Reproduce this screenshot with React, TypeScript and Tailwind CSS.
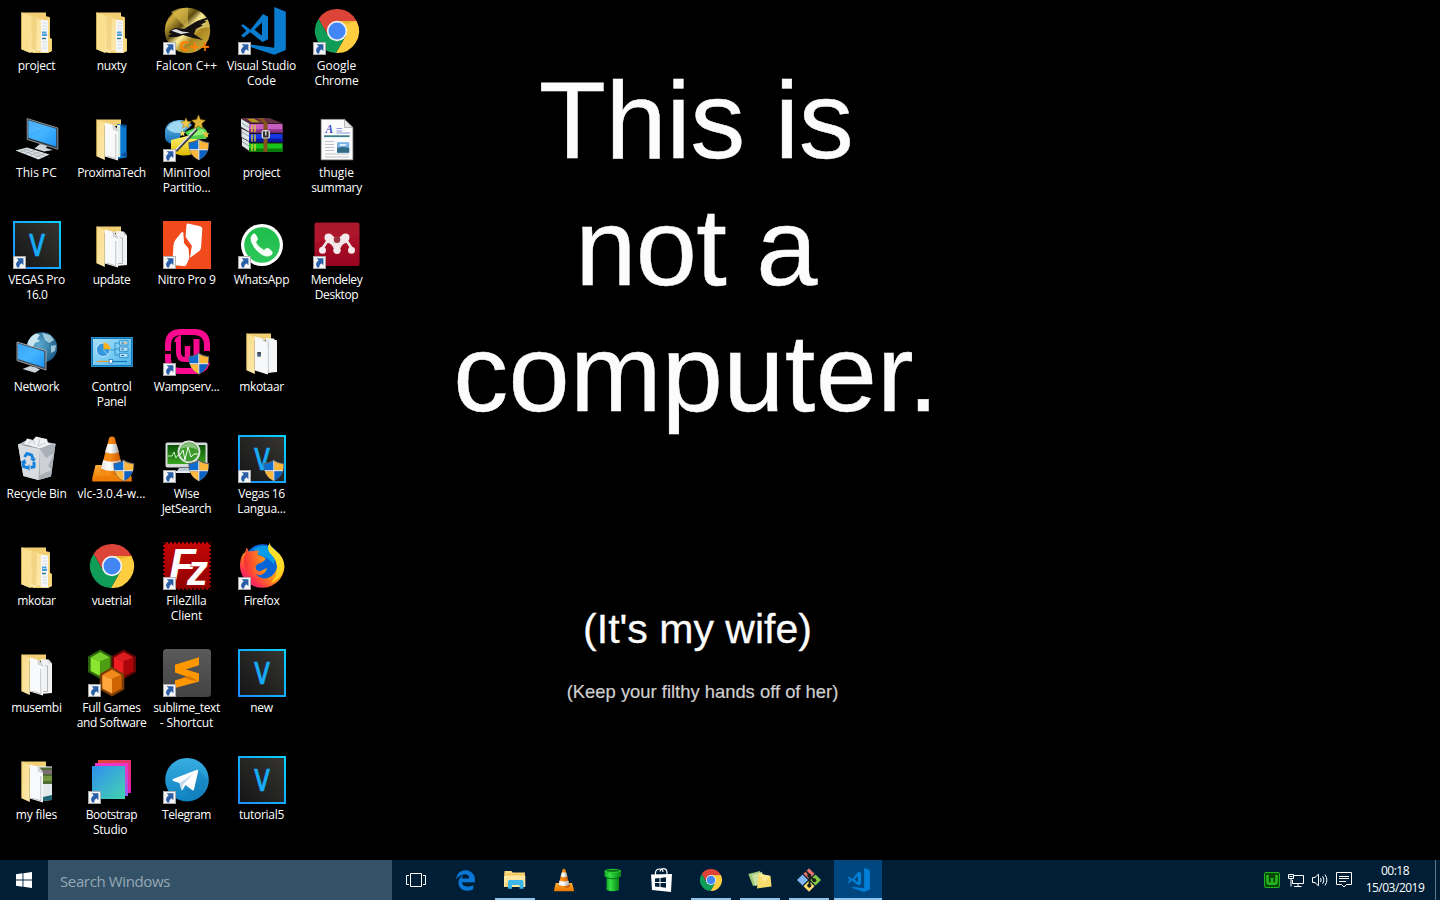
import { useLayoutEffect, useRef, useState, type ReactNode } from "react";
import { FaEdgeLegacy } from "react-icons/fa";

/** A single line of text whose letter spacing is adjusted to a given width. */
function FitLine({ text, width }: { text: string; width: number }) {
  const ref = useRef<HTMLSpanElement>(null);
  const [spacing, setSpacing] = useState(0);
  useLayoutEffect(() => {
    if (ref.current) {
      const natural = ref.current.getBoundingClientRect().width - spacing * text.length;
      setSpacing((width + 1 - natural) / text.length);
    }
  }, [text, width]);
  return (
    <span ref={ref} className="block w-max whitespace-pre" style={{ letterSpacing: `${spacing}px` }}>
      {text}
    </span>
  );
}

function SharedGradients() {
  return (
    <svg width="0" height="0" className="absolute">
      <defs>
        <linearGradient id="flap" x1="0" y1="0" x2="1" y2="1">
          <stop offset="0" stopColor="#f9dc87" />
          <stop offset="1" stopColor="#fde9ae" />
        </linearGradient>
        <linearGradient id="screen" x1="0" y1="0" x2="1" y2="1">
          <stop offset="0" stopColor="#3aa5f5" />
          <stop offset="0.5" stopColor="#45b4ff" />
          <stop offset="1" stopColor="#1c95f7" />
        </linearGradient>
        <linearGradient id="vbg" x1="0" y1="1" x2="1" y2="0">
          <stop offset="0" stopColor="#151515" />
          <stop offset="1" stopColor="#353432" />
        </linearGradient>
        <linearGradient id="vedge" x1="0" y1="1" x2="1" y2="0">
          <stop offset="0" stopColor="#1e8cff" />
          <stop offset="1" stopColor="#08d0fb" />
        </linearGradient>
        <linearGradient id="gold" x1="0" y1="0" x2="1" y2="1">
          <stop offset="0" stopColor="#6b5510" />
          <stop offset="0.2" stopColor="#c9a93a" />
          <stop offset="0.38" stopColor="#5d4b10" />
          <stop offset="0.5" stopColor="#fff09a" />
          <stop offset="0.65" stopColor="#a88620" />
          <stop offset="1" stopColor="#dcbc48" />
        </linearGradient>
        <linearGradient id="fox" x1="0.9" y1="0" x2="0.1" y2="0.9">
          <stop offset="0" stopColor="#fff44f" />
          <stop offset="0.35" stopColor="#ffc61e" />
          <stop offset="0.6" stopColor="#ff8a16" />
          <stop offset="0.82" stopColor="#ff3647" />
          <stop offset="1" stopColor="#e31587" />
        </linearGradient>
        <linearGradient id="foxhead" x1="0" y1="0" x2="1" y2="0">
          <stop offset="0" stopColor="#f5203f" />
          <stop offset="1" stopColor="#ff9416" />
        </linearGradient>
        <radialGradient id="globe" cx="0.4" cy="0.4" r="0.7">
          <stop offset="0" stopColor="#5caad0" />
          <stop offset="1" stopColor="#17567f" />
        </radialGradient>
        <linearGradient id="bs" x1="0" y1="0" x2="1" y2="1">
          <stop offset="0" stopColor="#2f8cf0" />
          <stop offset="1" stopColor="#45d6b0" />
        </linearGradient>
        <linearGradient id="bs2" x1="0" y1="0" x2="0" y2="1">
          <stop offset="0" stopColor="#f531c0" />
          <stop offset="1" stopColor="#8965f5" />
        </linearGradient>
        <linearGradient id="bs3" x1="0" y1="0" x2="1" y2="1">
          <stop offset="0" stopColor="#df4b27" />
          <stop offset="1" stopColor="#e41dbb" />
        </linearGradient>
        <linearGradient id="tg" x1="0" y1="0" x2="0" y2="1">
          <stop offset="0" stopColor="#37aee2" />
          <stop offset="1" stopColor="#1081c0" />
        </linearGradient>
        <linearGradient id="wa" x1="0" y1="0" x2="0" y2="1">
          <stop offset="0" stopColor="#1fbd4b" />
          <stop offset="1" stopColor="#2cc85a" />
        </linearGradient>
        <linearGradient id="cone" x1="0" y1="0" x2="1" y2="0">
          <stop offset="0" stopColor="#f08a1c" />
          <stop offset="0.4" stopColor="#f98b12" />
          <stop offset="1" stopColor="#bd4c02" />
        </linearGradient>
        <linearGradient id="coneWhite" x1="0" y1="0" x2="1" y2="0">
          <stop offset="0" stopColor="#e4e4e4" />
          <stop offset="0.4" stopColor="#ffffff" />
          <stop offset="1" stopColor="#a6a6a6" />
        </linearGradient>
        <linearGradient id="coneBase" x1="0" y1="0" x2="0" y2="1">
          <stop offset="0" stopColor="#fbb13b" />
          <stop offset="1" stopColor="#f08208" />
        </linearGradient>
        <linearGradient id="mend" x1="0" y1="0" x2="0" y2="1">
          <stop offset="0" stopColor="#a8182b" />
          <stop offset="0.45" stopColor="#b3152c" />
          <stop offset="1" stopColor="#9a0520" />
        </linearGradient>
        <linearGradient id="fz" x1="0" y1="0" x2="0" y2="1">
          <stop offset="0" stopColor="#c40606" />
          <stop offset="1" stopColor="#900000" />
        </linearGradient>
        <linearGradient id="st" x1="0" y1="0" x2="0" y2="1">
          <stop offset="0" stopColor="#5a5a5a" />
          <stop offset="1" stopColor="#434343" />
        </linearGradient>
        <linearGradient id="cp" x1="0" y1="0" x2="1" y2="1">
          <stop offset="0" stopColor="#a6def8" />
          <stop offset="0.5" stopColor="#7bcdf5" />
          <stop offset="1" stopColor="#4fb4ec" />
        </linearGradient>
        <linearGradient id="disk" x1="0" y1="0" x2="0" y2="1">
          <stop offset="0" stopColor="#6fc0ec" />
          <stop offset="1" stopColor="#0a67b0" />
        </linearGradient>
        <linearGradient id="pie" x1="0" y1="0" x2="0" y2="1">
          <stop offset="0" stopColor="#fff36a" />
          <stop offset="1" stopColor="#dfb800" />
        </linearGradient>
        <linearGradient id="pipe" x1="0" y1="0" x2="1" y2="0">
          <stop offset="0" stopColor="#0da522" />
          <stop offset="0.3" stopColor="#35e043" />
          <stop offset="1" stopColor="#078615" />
        </linearGradient>
        <linearGradient id="greenScreen" x1="0" y1="0" x2="0" y2="1">
          <stop offset="0" stopColor="#0a5207" />
          <stop offset="1" stopColor="#39a51e" />
        </linearGradient>
      </defs>
    </svg>
  );
}

function ShortcutArrow() {
  return (
    <g>
      <rect x="0.4" y="35.4" width="12.2" height="12.2" fill="#f4f4f4" stroke="#a9a9a9" strokeWidth="0.8" />
      <path d="M3.6 37.2H10.4V44.2L8.5 42.3Q6 43.6 6.2 46.4H4.3Q1.2 42.6 5.7 39.3Z" fill="#2a5ea6" />
    </g>
  );
}

function Shield() {
  return (
    <g>
      <path d="M35.8 24.6Q40 28 46.3 28.2Q46.8 41 35.8 46.6Q25 41 25.3 28.2Q31.6 28 35.8 24.6Z" fill="#5c5f66" />
      <path d="M35.3 26.2Q31.3 29 26.3 29.2Q26.2 32.4 26.8 35.2H35.3Z" fill="#0f6dd0" />
      <path d="M36.3 26.2Q40.3 29 45.3 29.2Q45.4 32.4 44.8 35.2H36.3Z" fill="#fbb73a" />
      <path d="M35.3 36.2H27Q29 42.4 35.3 45.6Z" fill="#fcb93d" />
      <path d="M36.3 36.2H44.6Q42.6 42.4 36.3 45.6Z" fill="#0a62c4" />
      <path d="M35.8 26V45.8M26.7 35.7H45" stroke="#fff" strokeWidth="0.9" />
    </g>
  );
}

function FullFolder() {
  return (
    <g>
      <path d="M8.5 5.5H33V9.3L36.8 10V31L38.8 32V44L35 46H20Z" fill="#f2cf73" />
      <path d="M27.5 12.5L35 13.5V45.5L27.5 45Z" fill="#f5f6f7" />
      <path d="M29.5 16H34M29.5 19H34M29.5 22H34M29.5 35H34M29.5 38H34M29.5 41H34" stroke="#c9ced6" strokeWidth="0.7" />
      <path d="M29 25.5H33.5M29 28H34" stroke="#4c9fd6" strokeWidth="2" />
      <path d="M29 31.5H33" stroke="#2b6f86" strokeWidth="1.4" />
      <path d="M8.5 5.5L25.5 11.5L27.6 12.5V43.5L23 44V45L16.8 45.8L8.5 42.3Z" fill="url(#flap)" />
      <path d="M18.5 9V42L23.2 44L24 12Z" fill="#f0cf7b" opacity="0.7" />
      <path d="M8.5 5.5L16.8 9.5V45.8L8.5 42.3Z" fill="#fbe08f" />
      <path d="M35 12V45.8L38.8 44V32L36.8 31V11Z" fill="#fadb83" />
      <path d="M8.5 5.5V42.3" stroke="#d9b452" strokeWidth="0.6" />
    </g>
  );
}

function OpenFolder({ children, sheet = true }: { children?: ReactNode; sheet?: boolean }) {
  return (
    <g>
      <path d="M8.5 5.5H33V12H16Z" fill="#f2cf73" />
      {sheet && (
        <g>
          <path d="M28 10L35.5 10.5L39 14.5V44L28 45Z" fill="#f1f2f3" />
          <path d="M32.2 16.5L34.5 17V42.5H30" fill="none" stroke="#8e9092" strokeWidth="0.6" />
          <path d="M35.5 10.5V14.5H39Z" fill="#d4d6d8" />
        </g>
      )}
      {children}
      <path d="M16.8 8.5L26 11L30 16.5V46.5L16.8 42.5Z" fill="#f8f9fa" />
      <path d="M18.5 42.2L27.8 44.6V20" fill="none" stroke="#9a9c9f" strokeWidth="0.6" />
      <path d="M24.8 10.7L25.4 15.4L30 17.2Q28.5 13 24.8 10.7Z" fill="#d6d8da" stroke="#b3b6b8" strokeWidth="0.4" />
      <path d="M8.5 5.5L16.8 9V46L8.5 42.3Z" fill="url(#flap)" />
      <path d="M8.7 5.5V42.3" stroke="#d9b452" strokeWidth="0.6" />
    </g>
  );
}

function Vegas() {
  return (
    <g>
      <rect x="1" y="1" width="46" height="46" fill="url(#vbg)" stroke="url(#vedge)" strokeWidth="2" />
      <text
        x="0"
        y="35"
        transform="translate(24 0) scale(0.84 1)"
        textAnchor="middle"
        fontFamily="'Open Sans', sans-serif"
        fontSize="30"
        fontWeight="600"
        fill="#17acf8"
        stroke="#17acf8"
        strokeWidth="0.5"
      >
        V
      </text>
    </g>
  );
}

function Chrome() {
  return (
    <g>
      <path d="M5.5 12A22 22 0 0 1 43.6 14H24L15.34 29Z" fill="#db4437" />
      <path d="M24 14H43.6A22 22 0 0 1 22.9 46L32.66 29Z" fill="#ffcd40" />
      <path d="M5.5 12L15.34 29H32.66L22.9 46A22 22 0 0 1 5.5 12Z" fill="#0f9d58" />
      <path d="M24 14H43.6L34 17Z" fill="#c99a1c" opacity="0.4" />
      <circle cx="24" cy="24" r="10.2" fill="#f1f1f1" />
      <circle cx="24" cy="24" r="8.5" fill="#4285f4" />
    </g>
  );
}

function VSCode({ fill = "#0a7dd1" }: { fill?: string }) {
  return (
    <g fill={fill}>
      <path d="M36.3 0L47.8 4.7V43L36.3 47.8L12.5 40V37.5L36.3 40.7Z" />
      <path
        fillRule="evenodd"
        d="M3 18.3L5.3 17.2L12.5 22.7L25 7L30 9.7V32.2L24.5 35L12.2 25.2L5.5 30.6L3 28.8L8.2 23.8ZM24 15.6L16.5 22.8L24 28.7Z"
      />
    </g>
  );
}

function Vlc() {
  return (
    <g>
      <path d="M7.5 30H40L43.5 42H4.5Z" fill="url(#coneBase)" />
      <path d="M4.3 42H43.7V46.5H4.3Z" fill="#ec7c06" />
      <path d="M21.3 2.4Q24 .5 26.7 2.4L36 37.5Q24 44.5 12 37.5Z" fill="url(#cone)" />
      <path d="M19.6 9H28.4L31 17Q24 20 17 17Z" fill="url(#coneWhite)" />
      <path d="M15.2 25Q24 28.5 32.7 25L35 33.5Q24 38.5 13 33.5Z" fill="url(#coneWhite)" />
    </g>
  );
}

function Winrar() {
  return (
    <g transform="translate(0 0.5) scale(1 0.87)">
      <path d="M3 4H30L44.5 10V43H11L3.5 37Z" fill="#2a1523" />
      <path d="M3 4H31L44.5 10H12Z" fill="#653044" />
      <path d="M9 5H16L22 9H14Z" fill="#b39a1d" />
      <path d="M3 5L11.5 10.5V20L3 14ZM3.5 16L11.5 21V31L3.5 26ZM4 27L11.5 32V42L4 36Z" fill="#dce5e3" />
      <path d="M4 10L11 15M4 20L11 25M4 31L11 36" stroke="#8c9fa0" />
      <path d="M11 11H44.5V21H11Z" fill="#c75ec0" />
      <path d="M11 17H44.5V21H11Z" fill="#8d3388" />
      <path d="M11 22H44.5V32H11Z" fill="#1636e0" />
      <path d="M11 28H44.5V32H11Z" fill="#0a169a" />
      <path d="M11 33H44.5V43H11Z" fill="#17c51b" />
      <path d="M11 39H44.5V43H11Z" fill="#087c0b" />
      <path d="M14 12V20M17 12V20M14 23V31M17 23V31M14 34V42M17 34V42" stroke="#e5d135" strokeWidth="1.3" />
      <path d="M11 21.5H44.5M11 32.5H44.5" stroke="#101010" />
      <path d="M20 4H25L29.5 10V43H25.5V10Z" fill="#85511d" />
      <rect x="24.3" y="18.5" width="7" height="8.5" rx="1.5" fill="#303030" stroke="#d6d6d6" strokeWidth="1.4" />
      <path d="M27.8 18V24" stroke="#efefef" strokeWidth="1.2" />
    </g>
  );
}

function Hexagon({ x, y, edge, top, left, right }: { x: number; y: number; edge: string; top: string; left: string; right: string }) {
  return (
    <g transform={`translate(${x} ${y})`}>
      <path d="M0 -15L12.3 -8V7.5L0 14.5L-12.3 7.5V-8Z" fill={edge} />
      <path d="M0 -12.5L9.7 -7L0 -3L-9.7 -7Z" fill={top} />
      <path d="M-9.7 -7L0 -3V11.8L-9.7 6.5Z" fill={left} />
      <path d="M9.7 -7L0 -3V11.8L9.7 6.5Z" fill={right} />
    </g>
  );
}

const star = "M0 -7L2 -2.2L7 -1.6L3.3 1.8L4.4 7L0 4.4L-4.4 7L-3.3 1.8L-7 -1.6L-2 -2.2Z";

const art: Record<string, ReactNode> = {
  fullFolder: <FullFolder />,
  openFolder: <OpenFolder />,
  blueFolder: (
    <OpenFolder sheet={false}>
      <path d="M29 10L38.5 11V43.5L29 45Z" fill="#0a78cf" />
      <path d="M29 11H32.3V43H29Z" fill="#d6ebe2" />
      <path d="M32.5 11H39L36.5 14ZM33 41L39 37V43Z" fill="#0a4f94" />
    </OpenFolder>
  ),
  dotFolder: (
    <g>
      <OpenFolder />
      <path d="M17.5 10L29.5 15V46L17.5 42Z" fill="#f7f8f9" />
      <path d="M31 12L38.8 12V43.5L31 44.5Z" fill="#f4f5f6" />
      <path d="M30.3 13V45" stroke="#b9bbbd" strokeWidth="0.7" />
      <rect x="19.3" y="24" width="3.6" height="4.6" fill="#43464d" />
      <path d="M20 27H22" stroke="#3f78c9" strokeWidth="1.5" />
    </g>
  ),
  photoFolder: (
    <OpenFolder sheet={false}>
      <path d="M22 10L39 10.5V44L28 45Z" fill="#e4e9ec" />
      <path d="M23 11.5H39V28H29Z" fill="#506b34" />
      <path d="M26 14H39V18H28Z" fill="#7d6b75" />
      <path d="M29 20H39V25H29Z" fill="#71963d" />
      <path d="M30 41L39 39V44L30 45Z" fill="#1e6675" />
    </OpenFolder>
  ),
  pc: (
    <g>
      <path d="M14.2 4.6L44.8 14V35.3L14.2 25.5Z" fill="#32373c" stroke="#a9b0b6" strokeWidth="0.8" />
      <path d="M15.3 6.2L43.2 14.8V32.7L15.3 23.8Z" fill="url(#screen)" />
      <path d="M15.3 6.2L35 12.3L15.3 20Z" fill="#fff" opacity="0.08" />
      <path d="M27 30L34 32L33 34L40 36L31 37.5L21.5 34.5Z" fill="#d2d8dc" />
      <path d="M2.6 36.5L14 33.6L36.5 40.5L25.5 45.4Z" fill="#dfe3e6" />
      <path d="M6.5 35.7L29 43.6M10.5 34.8L32.5 42M7 38L17 34.6M12 39.7L22 36.2M17 41.5L27 37.7M22 43L32 39.3" stroke="#989fa5" strokeWidth="0.6" />
    </g>
  ),
  network: (
    <g>
      <circle cx="29" cy="19.5" r="15.2" fill="url(#globe)" />
      <path d="M14.5 15Q17 8 23 5.5L27 7L24 11L27 13L22 15L20 19L15 19Z" fill="#c9e6ef" />
      <path d="M29 5L37 7L41 12L36 15L32 12ZM38 18L43 17L42 23L38 25Z" fill="#b9dbe8" opacity="0.8" />
      <path d="M4 14L33 22.5V42L4 32.5Z" fill="#3d4650" stroke="#bcc3c8" strokeWidth="0.8" />
      <path d="M5 15.6L31.3 23.4V39.5L5 31Z" fill="url(#screen)" />
      <path d="M17 38L23 39.5L27 41.5L22 44.8L9.5 41Z" fill="#cdd5da" />
    </g>
  ),
  recycle: (
    <g>
      <path d="M5 9.5L14 5L42.5 9L38 41.5L25 45L10.3 41Z" fill="#c2c7cd" />
      <path d="M5 9.5L27 14L42.5 9L27 5Z" fill="#8f969d" />
      <path d="M11 9L14 3.5L20 5L23 1.5L29 3L34 4L35 8L39 9L27 13.5Z" fill="#eff2f4" />
      <path d="M15 9L20 5L22 10M27 4L25 11L32 8" stroke="#b8bfc5" strokeWidth="0.8" fill="none" />
      <path d="M5 9.5L27 14L25.5 45L10.3 41Z" fill="#d9dde1" />
      <path d="M27 14L42.5 9L38 41.5L25.5 45Z" fill="#aab0b7" />
      <path d="M27 14L33 23L41 18L35 31L39 35L27 40Z" fill="#cdd1d6" />
      <path d="M5 9.5L42.5 9" stroke="#e9ecee" strokeWidth="0.6" />
      <path d="M11.5 22L14 18.5L18.5 20L20 23.5" fill="none" stroke="#1681dc" strokeWidth="3" />
      <path d="M10 26L10.5 31.5L15 33" fill="none" stroke="#1681dc" strokeWidth="3" />
      <path d="M17.5 32.5L21 31.8L21 27" fill="none" stroke="#1681dc" strokeWidth="3" />
      <path d="M17 24L23 23L21 27ZM8 27L12 24L13.5 29ZM16.5 29V36L13.5 32.5Z" fill="#1681dc" />
    </g>
  ),
  controlPanel: (
    <g>
      <rect x="3" y="9" width="42" height="30" fill="#1475b5" />
      <rect x="3.4" y="9.4" width="41.2" height="29.2" fill="none" stroke="#2b96d1" strokeWidth="0.8" />
      <rect x="5" y="11" width="38" height="26" fill="url(#cp)" />
      <circle cx="15.2" cy="21.8" r="6.8" fill="#3598df" stroke="#d9f0fc" strokeWidth="0.8" />
      <path d="M15.5 21.3V14.5A6.8 6.8 0 0 1 22.3 21.3Z" fill="#fbb01d" />
      <path d="M15.2 21.8L20 26.5" stroke="#bce2f8" strokeWidth="0.8" />
      <path d="M22 22H27V15H31M27 21H31M27 22V27H31" fill="none" stroke="#2484bd" strokeWidth="0.8" />
      <path d="M31.5 12.7H40V17H31.5ZM31.5 19H40V23.3H31.5ZM31.5 25.3H40V29.6H31.5Z" fill="#a9e0fb" stroke="#2484bd" strokeWidth="0.8" />
      <path d="M33.5 15H35.5M33.5 21.2H35.5M33.5 27.5H35.5" stroke="#236" strokeWidth="1" />
      <path d="M36 15H38.5" stroke="#f19a25" />
      <path d="M9 33.5H21" stroke="#f09b29" strokeWidth="1.2" />
      <path d="M24 33.5H39" stroke="#1674b5" strokeWidth="1.2" />
      <rect x="21.2" y="31.6" width="3.4" height="3.6" fill="#fff" stroke="#1674b5" strokeWidth="0.7" />
    </g>
  ),
  vlc: <Vlc />,
  chrome: <Chrome />,
  games: (
    <g>
      <Hexagon x={12.3} y={15.5} edge="#2c610d" top="#77cf2c" left="#8ae62e" right="#4f9d12" />
      <Hexagon x={35.7} y={15.5} edge="#650508" top="#db1d20" left="#ef1d22" right="#ac0509" />
      <Hexagon x={24} y={33} edge="#7a3b04" top="#f18a1b" left="#ffa63c" right="#cf6404" />
    </g>
  ),
  bootstrap: (
    <g>
      <rect x="10" y="4" width="33" height="33" fill="url(#bs3)" />
      <rect x="7" y="7" width="33" height="33" fill="url(#bs2)" />
      <rect x="4" y="10" width="33" height="33" fill="url(#bs)" />
      <path d="M4 40H37M7 10V43" stroke="#27a8b0" strokeWidth="0.5" opacity="0.5" />
    </g>
  ),
  falcon: (
    <g>
      <circle cx="24.5" cy="23.5" r="22.7" fill="url(#gold)" />
      <path d="M25 23L8 5Q16 0 25 .8Z" fill="#d5b749" opacity="0.7" />
      <path d="M25 23L47 20Q46 10 38 5Z" fill="#f0e48b" opacity="0.55" />
      <path d="M7 23.5L12 21L21 22L29 17Q38 11 48 10.5L41 14L44 14.5L38 17.5L40 18.5L33 22L31 27L40 33L30 31L20 28Q10 32 5 29L9 26.5L6 26Z" fill="#141010" />
      <path d="M8 23.5L13 22L19 24.5L27 25.5L18 27L12 25Z" fill="#dedede" />
      <text x="16.5" y="43.5" fontFamily="'DejaVu Sans', sans-serif" fontSize="13.5" fontWeight="700" textLength="30.5" lengthAdjust="spacingAndGlyphs" fill="#ff8000">
        C++
      </text>
    </g>
  ),
  minitool: (
    <g>
      <path d="M2 16Q4 7 16 6Q24 6 29 11L17 22V32Q3 30 2 24Z" fill="url(#disk)" />
      <path d="M4 14Q9 6 20 7L27 11L16 19Q7 19 4 14Z" fill="#a0d8f2" />
      <path d="M8 26L24 22H35V36Q30 42 19 41.5Q9 40 8 35Z" fill="url(#pie)" />
      <path d="M22 18L36 12Q44 14 45 21L43 25H27Z" fill="#4ed049" />
      <path d="M25 18L40 15L43 20L31 22Z" fill="#92ef78" />
      <path d={star} transform="translate(35.5 7.8)" fill="#e3b836" stroke="#7c5a0d" strokeWidth="0.6" />
      <path d={star} transform="translate(23 9) scale(.75)" fill="#efc94b" stroke="#80600d" strokeWidth="0.6" />
      <path d={star} transform="translate(19.5 19) scale(.45)" fill="#f7d85d" />
      <path d={star} transform="translate(43 20) scale(.5)" fill="#e9c13e" />
      <path d="M13 37L34 15" stroke="#3a4046" strokeWidth="2.8" />
      <path d="M12.5 36L33 14.5" stroke="#e4e8ea" strokeWidth="1.2" />
    </g>
  ),
  nitro: (
    <g>
      <rect width="48" height="48" fill="#f04a1d" />
      <path d="M23.5 3.5Q24 2.2 26 2.8L37 5.2Q39.6 6 39.3 8L38 27Q37.8 29 36 30.3L28.5 35.7Q27 37 27 35L28.8 25L22.5 17Z" fill="#fff" />
      <path d="M9.3 44L10.5 24Q11 20.5 13 18L18 12Q20.2 9.5 20.6 13.5L21.3 21.5L25.5 27L26.4 37L23.5 43.5Q22.5 46 20 45Z" fill="#fff" />
      <path d="M20.6 13L28.5 24.5L27 36L26 28L21 22Z" fill="#f04a1d" />
    </g>
  ),
  wamp: (
    <g fill="none" stroke="#fb0a8f">
      <path d="M5 23V17Q5 4 18 4H31Q44 4 44 17V23" strokeWidth="6" />
      <path d="M5 26V31Q5 43 18 43H31Q42 43 44 34" strokeWidth="6" />
      <path d="M13.8 14Q13.8 12 15.5 11V24Q15.5 31.5 22 31.5H31" strokeWidth="5" />
      <path d="M24.5 18V30" strokeWidth="5.5" />
      <path d="M33.5 11V28" strokeWidth="6" />
    </g>
  ),
  wise: (
    <g>
      <rect x="2.5" y="7.5" width="42" height="25" rx="2" fill="#d7dbdc" />
      <rect x="4.5" y="10" width="38" height="19" fill="url(#greenScreen)" />
      <path d="M16 33H32L35 38H13Z" fill="#bcc9d7" />
      <path d="M11 37H38" stroke="#e1eaf5" strokeWidth="2" />
      <path d="M5 21H9L11 17L13 23L15 20H19" stroke="#d4fbd0" strokeWidth="0.9" fill="none" />
      <path d="M32 25L37 32" stroke="#b9b9b9" strokeWidth="3.5" />
      <circle cx="26" cy="16.8" r="10.5" fill="#3c9a2a" stroke="#dfe2df" strokeWidth="1.8" />
      <path d="M17 20L20 15L22 25L25 12L28 22L31 19H35" stroke="#f0fff0" strokeWidth="1" fill="none" />
      <path d="M17 14Q20 7 27 8Q33 9 35 15Q26 10 17 14Z" fill="#fff" opacity="0.4" />
    </g>
  ),
  filezilla: (
    <g>
      <rect width="48" height="48" fill="url(#fz)" />
      <path d="M1 .6H48M1 47.4H48M.6 1V48M47.4 1V48" stroke="#000" strokeWidth="1.6" strokeDasharray="2 2" />
      <text x="6" y="38" fontFamily="'Liberation Sans', Arial, sans-serif" fontSize="44" fontWeight="700" fontStyle="italic" fill="#fff" stroke="#b00404" strokeWidth="1" paintOrder="stroke">
        F
        <tspan dx="-9" dy="4.5" fontSize="42">
          z
        </tspan>
      </text>
    </g>
  ),
  sublime: (
    <g>
      <rect width="48" height="48" rx="3.5" fill="url(#st)" />
      <path d="M12 21.5V15.8L36 8.3V16.3L19 21.5Z" fill="#ff9800" />
      <path d="M12 16V23.5L36 32V24.5L20 19.5Z" fill="#ff9800" />
      <path d="M12 39V31.5L29 26L36 25V32.5Z" fill="#ff9800" />
      <path d="M21 28.5L26 27L36 32Q28 32 21 28.5Z" fill="#d87700" />
    </g>
  ),
  telegram: (
    <g>
      <circle cx="24" cy="23.7" r="21.8" fill="url(#tg)" />
      <path d="M35 13.5L45 24Q43 39 31 44L23 35Z" fill="#0c75b0" opacity="0.35" />
      <path d="M10 23L34 13.8Q35.6 13.3 35.2 15.3L31 33.5Q30.5 35 29 34L22.5 29L19.5 34Q18.5 35 18.2 33L16.5 27L10.5 25Q8.5 24 10 23Z" fill="#fff" />
      <path d="M16.5 27L31 17.5L20 28.5L19.2 34L18.2 33Z" fill="#c7daeb" />
    </g>
  ),
  vscode: <VSCode />,
  winrar: <Winrar />,
  whatsapp: (
    <g>
      <circle cx="24" cy="24" r="21" fill="#fff" />
      <circle cx="24" cy="24" r="17.8" fill="url(#wa)" />
      <path d="M17.2 13.3L19 16.2Q20.2 18.3 18.5 20L17.6 21.2Q20.2 26.5 26 29.4L27.7 28Q29.3 26.4 31.5 28.2L33.8 30.5Q35 32.3 33 34Q28.5 36.7 22.8 32.8Q16.2 28.3 13.3 20.5Q12.2 16.3 14.7 13.5Q16 12.2 17.2 13.3Z" fill="#f8fff9" stroke="#fff" strokeWidth="0.8" />
    </g>
  ),
  vegas: <Vegas />,
  firefox: (
    <g>
      <circle cx="24.5" cy="20" r="17.8" fill="#0865d8" />
      <path d="M15 7Q24 1 33 6Q38 14 36 22Q28 14 19 12Z" fill="#079bea" />
      <path d="M8.7 5.7L11 10Q14.5 8 17 9.7L20.5 8.6L19.5 13Q24 14 27.5 16.4Q26 20 20 21.4L17.6 24Q17 28.5 21.5 29.4L29 26L28 29Q24 35 17.5 32Q24 38.5 31 35.5Q38 32 39 25Q39 18 34 13Q28 8.5 31.5 1Q32 4 37 8Q46.5 15 46.5 25A22.3 22.3 0 0 1 2 25Q1.8 17 5 12L7.2 10.3Z" fill="url(#fox)" />
      <path d="M8.7 5.7L11 10Q14.5 8 20.5 8.6L19.5 13Q24 14 27.5 16.4Q26 20 20 21.4L17.6 24Q14 28 18 34Q7 32 6 21Q5 15 7.5 11Z" fill="url(#foxhead)" opacity="0.8" />
      <path d="M31.5 1Q32 5 37 9Q45 16 45 25Q44 37 33 41Q42 31 38 20Q36 15 32 11Q29 7 31.5 1Z" fill="#ffe226" opacity="0.75" />
    </g>
  ),
  document: (
    <g>
      <path d="M8.2 5.4H31.5L39.8 13.5V45.8H8.2Z" fill="#fbfbfb" stroke="#ababab" strokeWidth="0.7" />
      <path d="M31.5 5.4V13.5H39.8Z" fill="#e6e6e6" stroke="#9e9e9e" strokeWidth="0.7" />
      <text x="12.5" y="18.8" fontFamily="'Liberation Serif', serif" fontSize="11.5" fontWeight="700" fontStyle="italic" fill="#3c4cc5">
        A
      </text>
      <path d="M23.5 14.5H29M23.5 17H29M23.5 19H37" stroke="#8c99dc" strokeWidth="1" />
      <path d="M11 22.2H36.5" stroke="#397f89" strokeWidth="1.8" />
      <path d="M12 27.5H21M12 30.5H21M12 33.5H21M12 36.5H21M12 40H36M12 43H36" stroke="#b8bbc1" strokeWidth="0.9" />
      <rect x="24" y="28.2" width="12.2" height="10.5" fill="#78b1e7" />
      <path d="M24 34Q30 32 36.2 34V38.7H24Z" fill="#326c88" />
      <path d="M27 30H34L32 32H26Z" fill="#d9edfa" />
    </g>
  ),
  mendeley: (
    <g>
      <rect x="1.5" y="1.5" width="45" height="43.5" rx="2" fill="url(#mend)" />
      <path d="M1.5 21L46.5 15V43Q46.5 45 44.5 45H3.5Q1.5 45 1.5 43Z" fill="#90001a" opacity="0.25" />
      <path d="M9 28L16.5 17M32 17L39 28M24 22V29" fill="none" stroke="#f3e6e8" strokeWidth="2.6" />
      <path d="M12.5 17Q15 12 19.5 14.5Q24 20 28.5 14.5Q33 12 36 17L33.5 22Q30 22 27.5 27H20.5Q18 22 14.5 22Z" fill="#f3e6e8" />
      <circle cx="24" cy="18.8" r="3.3" fill="#9c3644" />
      <g fill="#f5eaec">
        <circle cx="15.5" cy="16.6" r="4" />
        <circle cx="32.5" cy="16.6" r="4" />
        <circle cx="9.5" cy="29.2" r="3.5" />
        <circle cx="24" cy="29.2" r="3.7" />
        <circle cx="38.5" cy="29.2" r="3.5" />
      </g>
    </g>
  ),
};

type Line = [string, number];
interface Item {
  icon: string;
  lines: Line[];
  shortcut?: boolean;
  shield?: boolean;
}

const columns: Item[][] = [
  [
    { icon: "fullFolder", lines: [["project", 36.5]] },
    { icon: "pc", lines: [["This PC", 40]] },
    { icon: "vegas", lines: [["VEGAS Pro", 55.7], ["16.0", 20.5]], shortcut: true },
    { icon: "network", lines: [["Network", 44.3]] },
    { icon: "recycle", lines: [["Recycle Bin", 59]] },
    { icon: "fullFolder", lines: [["mkotar", 37.3]] },
    { icon: "openFolder", lines: [["musembi", 49.3]] },
    { icon: "photoFolder", lines: [["my files", 40.3]] },
  ],
  [
    { icon: "fullFolder", lines: [["nuxty", 28.7]] },
    { icon: "blueFolder", lines: [["ProximaTech", 67.5]] },
    { icon: "openFolder", lines: [["update", 36.7]] },
    { icon: "controlPanel", lines: [["Control", 39], ["Panel", 28.3]] },
    { icon: "vlc", lines: [["vlc-3.0.4-w...", 67]], shield: true },
    { icon: "chrome", lines: [["vuetrial", 38.7]] },
    { icon: "games", lines: [["Full Games", 57.3], ["and Software", 68.7]], shortcut: true },
    { icon: "bootstrap", lines: [["Bootstrap", 50.5], ["Studio ", 36]], shortcut: true },
  ],
  [
    { icon: "falcon", lines: [["Falcon C++", 60.5]], shortcut: true },
    { icon: "minitool", lines: [["MiniTool", 46.5], ["Partitio...", 46.7]], shortcut: true, shield: true },
    { icon: "nitro", lines: [["Nitro Pro 9", 57]], shortcut: true },
    { icon: "wamp", lines: [["Wampserv...", 64.7]], shortcut: true, shield: true },
    { icon: "wise", lines: [["Wise", 24.7], ["JetSearch", 48.7]], shortcut: true, shield: true },
    { icon: "filezilla", lines: [["FileZilla", 39.3], ["Client", 30.3]], shortcut: true },
    { icon: "sublime", lines: [["sublime_text", 65.7], ["- Shortcut", 52.3]], shortcut: true },
    { icon: "telegram", lines: [["Telegram", 48]], shortcut: true },
  ],
  [
    { icon: "vscode", lines: [["Visual Studio", 68], ["Code", 28]], shortcut: true },
    { icon: "winrar", lines: [["project", 36.5]] },
    { icon: "whatsapp", lines: [["WhatsApp", 54.7]], shortcut: true },
    { icon: "dotFolder", lines: [["mkotaar", 43.3]] },
    { icon: "vegas", lines: [["Vegas 16", 45.3], ["Langua...", 47.3]], shortcut: true, shield: true },
    { icon: "firefox", lines: [["Firefox", 34.7]], shortcut: true },
    { icon: "vegas", lines: [["new", 21.5]] },
    { icon: "vegas", lines: [["tutorial5", 44]] },
  ],
  [
    { icon: "chrome", lines: [["Google", 38.3], ["Chrome", 43]], shortcut: true },
    { icon: "document", lines: [["thugie", 34], ["summary", 49.7]] },
    { icon: "mendeley", lines: [["Mendeley", 50.7], ["Desktop", 42.3]], shortcut: true },
  ],
];

function DesktopIcon({ item }: { item: Item }) {
  return (
    <div className="flex h-[107px] w-[74px] shrink-0 flex-col items-center">
      <svg viewBox="0 0 48 48" className="size-12 shrink-0 overflow-visible">
        {art[item.icon]}
        {item.shortcut && <ShortcutArrow />}
        {item.shield && <Shield />}
      </svg>
      <div className="mt-[3px] -ml-px flex flex-col items-center text-[12px] leading-[15px] text-white">
        {item.lines.map(([text, width]) => (
          <FitLine key={text} text={text} width={width} />
        ))}
      </div>
    </div>
  );
}

type TaskState = "idle" | "open" | "active";

const tasks: { name: string; state: TaskState; icon: ReactNode }[] = [
  { name: "edge", state: "idle", icon: <FaEdgeLegacy className="mr-px size-[21px] text-[#0a78d7]" /> },
  {
    name: "explorer",
    state: "open",
    icon: (
      <svg viewBox="0 0 24 24" className="size-6">
        <path d="M1.5 3H8.5L9.5 4.5H22V19H1Z" fill="#fbdc84" />
        <path d="M1.2 5.5H22V7H1.2Z" fill="#f5c65a" />
        <path d="M1 8H22.3V19H1Z" fill="#fde8a1" />
        <path d="M5 13.5Q5 12 6.5 12H19Q20.5 12 20.5 13.5V20.7H16.5V17H9V20.7H5Z" fill="#3bb7ea" />
        <path d="M2 14H5V19H2Z" fill="#f8d67a" />
      </svg>
    ),
  },
  {
    name: "vlc",
    state: "idle",
    icon: (
      <svg viewBox="0 0 48 48" className="size-6">
        <Vlc />
      </svg>
    ),
  },
  {
    name: "pipe",
    state: "idle",
    icon: (
      <svg viewBox="0 0 24 24" className="size-6">
        <path d="M5.5 8H18V22Q12 24.5 5.5 22Z" fill="url(#pipe)" />
        <path d="M3.5 3V8.5Q12 11.5 20 8.5V3Z" fill="url(#pipe)" />
        <ellipse cx="11.8" cy="2.8" rx="8.3" ry="2" fill="#2bca36" />
        <ellipse cx="11.8" cy="2.8" rx="6.7" ry="1" fill="#0a7015" />
        <path d="M5.5 9.8Q12 12 18 9.8" stroke="#04590b" strokeWidth="0.8" fill="none" />
      </svg>
    ),
  },
  {
    name: "store",
    state: "idle",
    icon: (
      <svg viewBox="0 0 24 24" className="size-6">
        <path d="M1 6.5L22 6L21 24L2 22Z" fill="#fff" />
        <path d="M5.5 7V4.5Q6 1 9.5 1Q13 1 13 4M10 3.5Q10.5 .7 13.5 .7Q17 .7 17 5V7" fill="none" stroke="#fff" strokeWidth="1.2" />
        <path d="M5 10.6L9.5 10V14H5ZM10.5 9.9L16 9.2V14H10.5ZM5 15H9.5V19L5 18.5ZM10.5 15H16V19.8L10.5 19.1Z" fill="#001f36" />
      </svg>
    ),
  },
  {
    name: "chrome",
    state: "open",
    icon: (
      <svg viewBox="0 0 48 48" className="size-6">
        <Chrome />
      </svg>
    ),
  },
  {
    name: "notes",
    state: "open",
    icon: (
      <svg viewBox="0 0 24 24" className="size-6">
        <path d="M.3 6L12 3L15 15L5 18Z" fill="#9fca76" />
        <path d="M4 7L14 4L17 15L7 18Z" fill="#c9e0a4" />
        <path d="M10.5 5.5L22.5 8L23.5 18.5L9 20.5Z" fill="#f5dc6b" />
        <path d="M10.5 5.5L22.5 8L16 14Z" fill="#faea91" />
      </svg>
    ),
  },
  {
    name: "git",
    state: "open",
    icon: (
      <svg viewBox="0 0 24 24" className="size-6">
        <path d="M12 .2L17.5 5.7L12 11.2L6.5 5.7Z" fill="#f07171" />
        <path d="M5.5 6.5L11 12L5.5 17.5L0 12Z" fill="#80b7f0" />
        <path d="M12 12.8L17.5 18.3L12 23.8L6.5 18.3Z" fill="#ffdd6e" />
        <path d="M18.5 6.5L24 12L18.5 17.5L13 12Z" fill="#86c940" />
        <path d="M9 3L12.5 7V18M12.5 8.5L17 12" stroke="#17201d" strokeWidth="1.8" fill="none" />
        <circle cx="12.3" cy="7.5" r="2" fill="#17201d" />
        <circle cx="17.3" cy="12.2" r="2" fill="#17201d" />
        <circle cx="12.3" cy="17.6" r="2.1" fill="#17201d" />
      </svg>
    ),
  },
  {
    name: "code",
    state: "active",
    icon: (
      <svg viewBox="0 0 48 48" className="size-6">
        <VSCode fill="#0080d7" />
      </svg>
    ),
  },
];

const tray: { name: string; icon: ReactNode }[] = [
  {
    name: "wamp",
    icon: (
      <svg viewBox="0 0 16 16" className="size-4">
        <rect x="0.5" y="0.5" width="15" height="15" rx="1.5" fill="#044a05" stroke="#18b515" />
        <path d="M3.5 3V9.5Q3.5 11.7 5.5 11.7H10.5Q12.5 11.7 12.5 9.5V3M8 6V11" fill="none" stroke="#25b51f" strokeWidth="2.6" />
      </svg>
    ),
  },
  {
    name: "network",
    icon: (
      <svg viewBox="0 0 16 16" className="size-4">
        <path d="M6 3.5H15.5V11.5H4.5V8M10 11.5V14.5M6 14.5H13.5M.5 2.5H5.5V6.5H.5ZM3 6.5V14.5M1.5 4.5H4.5" fill="none" stroke="#fff" />
      </svg>
    ),
  },
  {
    name: "sound",
    icon: (
      <svg viewBox="0 0 16 16" className="size-4">
        <path d="M.5 5.5H3L6.5 2.2V13.8L3 10.5H.5Z" fill="none" stroke="#fff" />
        <path d="M8.5 6Q9.8 8 8.5 10M10.7 4.2Q13.2 8 10.7 11.8M13 2.6Q16.8 8 13 13.4" fill="none" stroke="#fff" />
      </svg>
    ),
  },
  {
    name: "actions",
    icon: (
      <svg viewBox="0 0 16 16" className="size-4">
        <path d="M.5 .5H15.5V12.5H10.5L8 15L5.5 12.5H.5Z" fill="none" stroke="#fff" />
        <path d="M3 4.5H13M3 6.5H13M3 9.5H10" stroke="#fff" />
      </svg>
    ),
  },
];

function Taskbar() {
  return (
    <footer className="flex h-10 shrink-0 bg-[#001f36]">
      <div className="flex w-12 items-center justify-center">
        <svg viewBox="0 0 16 16" className="size-4">
          <path d="M0 2.2L6.5 1.3V7.5H0ZM7.4 1.2L16 0V7.5H7.4ZM0 8.4H6.5V14.7L0 13.8ZM7.4 8.4H16V16L7.4 14.8Z" fill="#fff" />
        </svg>
      </div>
      <div className="flex w-[344px] items-center bg-[#345267] pt-0.5 pl-3 text-[15px] text-[#97a8b5]">
        <FitLine text="Search Windows" width={109} />
      </div>
      <div className="flex w-12 items-center justify-center">
        <svg viewBox="0 0 20 14" className="h-3.5 w-5">
          <path d="M4.5.5H15.5V13.5H4.5ZM3 2.5H.5V11.5H3M17 2.5H19.5V11.5H17" fill="none" stroke="#fff" />
        </svg>
      </div>
      <nav className="ml-0.5 flex gap-px">
        {tasks.map(({ name, state, icon }) => (
          <div key={name} className={`flex w-12 flex-col items-center ${state === "active" ? "bg-[#00467f]" : ""}`}>
            <div className="flex h-[38px] items-center justify-center pt-0.5">{icon}</div>
            {state !== "idle" && <div className={`h-0.5 bg-[#90c3ec] ${state === "active" ? "w-12" : "w-10"}`} />}
          </div>
        ))}
      </nav>
      <div className="ml-auto flex">
        {tray.map(({ name, icon }) => (
          <div key={name} className="flex w-6 items-center justify-center">
            {icon}
          </div>
        ))}
        <div className="flex w-[79px] flex-col items-center pt-[2px] pr-px text-[12px] leading-[17px] text-white">
          <FitLine text="00:18" width={27} />
          <FitLine text="15/03/2019" width={57.7} />
        </div>
        <div className="w-[5px] border-l border-[#64788a]" />
      </div>
    </footer>
  );
}

export default function App() {
  return (
    <div className="flex h-[900px] w-[1440px] flex-col overflow-hidden bg-black font-['Open_Sans','Noto_Sans',sans-serif]">
      <SharedGradients />
      <main className="flex h-[860px] shrink-0 overflow-hidden">
        <div className="flex gap-px pt-[7px]">
          {columns.map((items, i) => (
            <div key={i} className="flex flex-col">
              {items.map((item, j) => (
                <DesktopIcon key={j} item={item} />
              ))}
            </div>
          ))}
        </div>
        <section className="ml-[22px] flex w-[600px] flex-col items-center pt-[57px] font-['Liberation_Sans',Arial,sans-serif] text-[#fcfcfc]">
          <div className="text-center text-[110px] leading-[126.7px] [-webkit-text-stroke:0.4px_#fcfcfc]">
            <p className="tracking-[-0.5px]">This is</p>
            <p className="tracking-[-0.6px]">not a</p>
            <p className="tracking-[0.3px]">computer.</p>
          </div>
          <p className="mt-[168px] pl-[3px] text-[41px] leading-[48px] [-webkit-text-stroke:0.3px_#fcfcfc]">(It's my wife)</p>
          <p className="mt-[28px] pl-[13px] text-[18.4px] leading-[22px] text-[#cfcfcf] [-webkit-text-stroke:0.2px_#cfcfcf]">
            (Keep your filthy hands off of her)
          </p>
        </section>
      </main>
      <Taskbar />
    </div>
  );
}
